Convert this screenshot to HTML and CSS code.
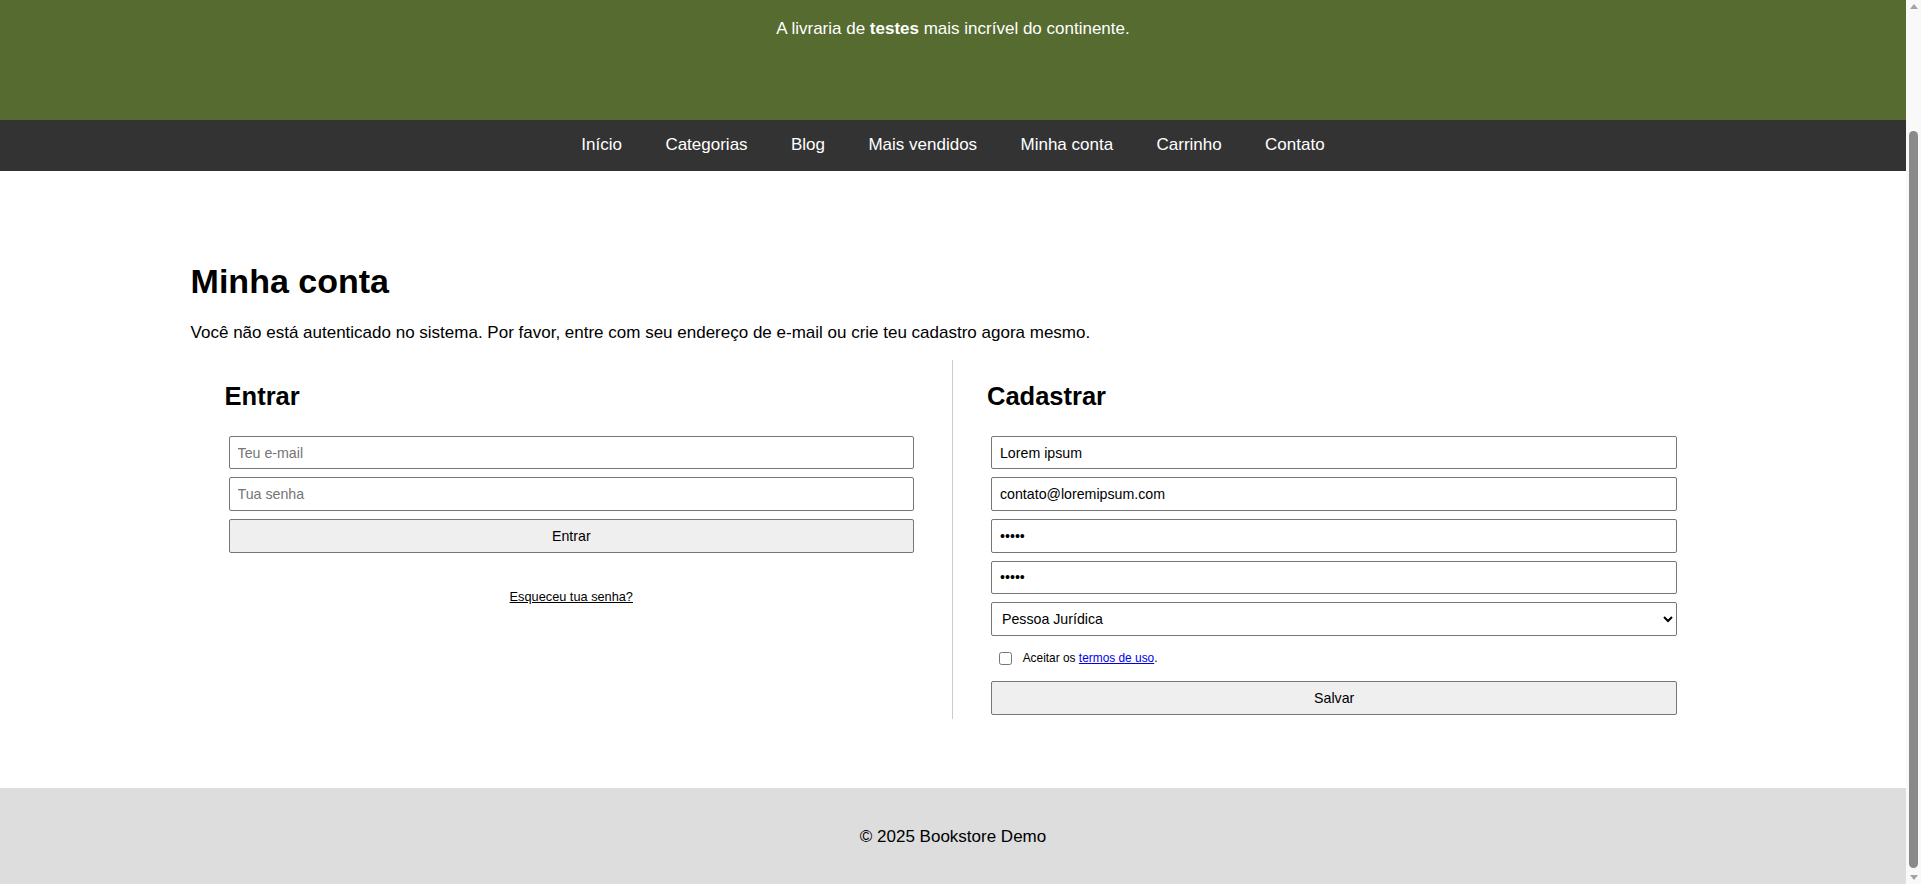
FILE: index.html
```html
<!DOCTYPE html>
<html lang="pt-BR">
<head>
<meta charset="utf-8">
<title>Minha conta</title>
<link rel="stylesheet" href="styles.css">
</head>
<body>
<div class="site">
  <header class="site-header">
    <p class="tagline">A livraria de <strong>testes</strong> mais incrível do continente.</p>
  </header>

  <nav class="main-nav">
    <a href="#">Início</a>
    <a href="#">Categorias</a>
    <a href="#">Blog</a>
    <a href="#">Mais vendidos</a>
    <a href="#">Minha conta</a>
    <a href="#">Carrinho</a>
    <a href="#">Contato</a>
  </nav>

  <main class="page">
    <h1 class="page-title">Minha conta</h1>
    <p class="intro">Você não está autenticado no sistema. Por favor, entre com seu endereço de e-mail ou crie teu cadastro agora mesmo.</p>

    <div class="account-grid">
      <section class="account-col account-col--login">
        <h2 class="col-title">Entrar</h2>
        <form class="form">
          <input class="field" type="email" placeholder="Teu e-mail">
          <input class="field" type="password" placeholder="Tua senha">
          <button class="btn" type="button">Entrar</button>
        </form>
        <p class="forgot"><a href="#">Esqueceu tua senha?</a></p>
      </section>

      <section class="account-col account-col--register">
        <h2 class="col-title">Cadastrar</h2>
        <form class="form">
          <input class="field" type="text" value="Lorem ipsum">
          <input class="field" type="email" value="contato@loremipsum.com">
          <input class="field" type="password" value="12345">
          <input class="field" type="password" value="12345">
          <select class="field field--select">
            <option>Pessoa Física</option>
            <option selected>Pessoa Jurídica</option>
          </select>
          <label class="terms">
            <input class="terms-check" type="checkbox">
            <span>Aceitar os <a class="terms-link" href="#">termos de uso</a>.</span>
          </label>
          <button class="btn" type="button">Salvar</button>
        </form>
      </section>
    </div>
  </main>

  <footer class="site-footer">© 2025 Bookstore Demo</footer>
</div>

<div class="scrollbar" aria-hidden="true">
  <span class="sb-arrow sb-arrow--up"></span>
  <div class="sb-track"><div class="sb-thumb"></div></div>
  <span class="sb-arrow sb-arrow--down"></span>
</div>
</body>
</html>
```

FILE: styles.css
```css
* {
  box-sizing: border-box;
}

html,
body {
  margin: 0;
  padding: 0;
}

body {
  display: flex;
  height: 884px;
  overflow: hidden;
  font-family: "Liberation Sans", Arial, sans-serif;
  font-size: 17px;
  color: #000;
  background: #fff;
}

.site {
  flex: 1;
  min-width: 0;
}

/* Header */
.site-header {
  background: #556b2f;
  color: #fff;
  text-align: center;
  height: 120px;
  padding-top: 18.5px;
}

.tagline {
  margin: 0;
}

/* Navigation */
.main-nav {
  background: #333;
  height: 50.5px;
  display: flex;
  align-items: center;
  justify-content: center;
  gap: 43.4px;
}

.main-nav a {
  color: #fff;
  text-decoration: none;
}

/* Main */
.page {
  width: 80%;
  margin: 0 auto;
  padding: 68.3px 0 69.7px;
}

.page-title {
  font-size: 34px;
  font-weight: bold;
  margin: 22.8px 0;
}

.intro {
  margin: 22.8px 0 17px;
}

.account-grid {
  display: flex;
}

.account-col {
  width: 50%;
  padding: 0 34px;
}

.account-col--login {
  border-right: 1px solid #ccc;
}

.col-title {
  font-size: 25.5px;
  font-weight: bold;
  margin: 21.2px 0;
}

.form {
  display: flex;
  flex-direction: column;
  margin: 0;
}

.field,
.btn {
  display: block;
  width: calc(100% - 8px);
  height: 33.6px;
  margin: 4px;
  padding: 0 8px;
  font-family: "Liberation Sans", Arial, sans-serif;
  font-size: 14.2px;
  color: #000;
  border: 1px solid #767676;
  border-radius: 2px;
  background: #fff;
}

.field::placeholder {
  color: #757575;
}

.field--select {
  padding-left: 6px;
}

.btn {
  background: #efefef;
  text-align: center;
}

.forgot {
  margin: 32.4px 0 0;
  text-align: center;
  font-size: 12.75px;
}

.forgot a {
  color: #000;
}

.terms {
  display: flex;
  align-items: center;
  gap: 10.7px;
  padding: 9.2px 0 9.2px 12px;
  font-size: 11.9px;
}

.terms-check {
  margin: 3px 0;
  width: 13px;
  height: 13px;
}

.terms-link {
  color: #0000ee;
}

/* Footer */
.site-footer {
  background: #ddd;
  text-align: center;
  padding: 38.6px 0;
}

/* Browser scrollbar */
.scrollbar {
  flex: 0 0 15px;
  display: flex;
  flex-direction: column;
  align-items: center;
  background: #f9f9f9;
}

.sb-arrow {
  width: 0;
  height: 0;
}

.sb-arrow--up {
  margin: 4px 0 6px;
  border-left: 4px solid transparent;
  border-right: 4px solid transparent;
  border-bottom: 5px solid #a3a3a3;
}

.sb-arrow--down {
  margin: 4px 0 4px;
  border-left: 4px solid transparent;
  border-right: 4px solid transparent;
  border-top: 5px solid #a3a3a3;
}

.sb-track {
  flex: 1;
  width: 100%;
  display: flex;
  flex-direction: column;
  justify-content: flex-end;
  align-items: center;
  padding-bottom: 3px;
}

.sb-thumb {
  width: 9px;
  height: 737px;
  border-radius: 5px;
  background: #8a8a8a;
}
```
